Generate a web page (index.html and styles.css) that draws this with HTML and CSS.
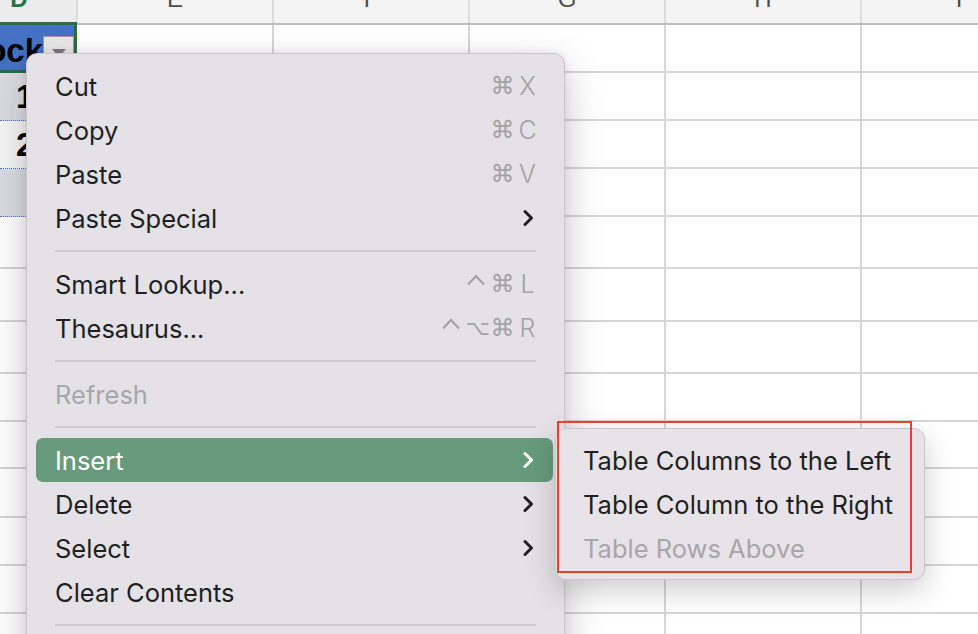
FILE: index.html
```html
<!DOCTYPE html>
<html>
<head>
<meta charset="utf-8">
<title>Context menu</title>
<link rel="stylesheet" href="styles.css">
</head>
<body>
<div class="sheet">
  <div class="hdr">
    <div class="hc first"><span>D</span></div>
    <div class="hc"><span>E</span></div>
    <div class="hc"><span>F</span></div>
    <div class="hc"><span>G</span></div>
    <div class="hc"><span>H</span></div>
    <div class="hc"><span>I</span></div>
  </div>
  <div class="row h48">
    <div class="c first th"><span class="thtext">Stock</span><span class="filter"><svg width="16" height="10" viewBox="0 0 16 10"><path d="M1 1 L15 1 L8 9 Z" fill="#7b7b7b"/></svg></span></div>
    <div class="c"></div><div class="c"></div><div class="c"></div><div class="c"></div><div class="c"></div>
  </div>
  <div class="row h48">
    <div class="c first band num">1</div>
    <div class="c"></div><div class="c"></div><div class="c"></div><div class="c"></div><div class="c"></div>
  </div>
  <div class="row h48">
    <div class="c first band2 num">2</div>
    <div class="c"></div><div class="c"></div><div class="c"></div><div class="c"></div><div class="c"></div>
  </div>
  <div class="row h48">
    <div class="c first band"></div>
    <div class="c"></div><div class="c"></div><div class="c"></div><div class="c"></div><div class="c"></div>
  </div>
  <div class="row h52">
    <div class="c first"></div><div class="c"></div><div class="c"></div><div class="c"></div><div class="c"></div><div class="c"></div>
  </div>
  <div class="row h53">
    <div class="c first"></div><div class="c"></div><div class="c"></div><div class="c"></div><div class="c"></div><div class="c"></div>
  </div>
  <div class="row h52">
    <div class="c first"></div><div class="c"></div><div class="c"></div><div class="c"></div><div class="c"></div><div class="c"></div>
  </div>
  <div class="row h48">
    <div class="c first"></div><div class="c"></div><div class="c"></div><div class="c"></div><div class="c"></div><div class="c"></div>
  </div>
  <div class="row h47">
    <div class="c first"></div><div class="c"></div><div class="c"></div><div class="c"></div><div class="c"></div><div class="c"></div>
  </div>
  <div class="row h49">
    <div class="c first"></div><div class="c"></div><div class="c"></div><div class="c"></div><div class="c"></div><div class="c"></div>
  </div>
  <div class="row h48">
    <div class="c first"></div><div class="c"></div><div class="c"></div><div class="c"></div><div class="c"></div><div class="c"></div>
  </div>
  <div class="row h48">
    <div class="c first"></div><div class="c"></div><div class="c"></div><div class="c"></div><div class="c"></div><div class="c"></div>
  </div>
  <div class="row h48">
    <div class="c first"></div><div class="c"></div><div class="c"></div><div class="c"></div><div class="c"></div><div class="c"></div>
  </div>
</div>

<div class="menu">
  <div class="item"><span class="label">Cut</span><span class="keys"><span class="k sym">⌘</span><span class="k">X</span></span></div>
  <div class="item"><span class="label">Copy</span><span class="keys"><span class="k sym">⌘</span><span class="k">C</span></span></div>
  <div class="item"><span class="label">Paste</span><span class="keys"><span class="k sym">⌘</span><span class="k">V</span></span></div>
  <div class="item"><span class="label">Paste Special</span><span class="keys"><span class="k arrow"><svg width="12" height="18" viewBox="0 0 12 18"><path d="M3 2.5 L9.5 9 L3 15.5" fill="none" stroke="#1f1f21" stroke-width="3" stroke-linecap="round" stroke-linejoin="round"/></svg></span></span></div>
  <div class="sep"></div>
  <div class="item"><span class="label">Smart Lookup...</span><span class="keys"><span class="k ctrl" aria-label="Control"><svg width="20" height="12" viewBox="0 0 20 12"><path d="M2 10.5 L10 2 L18 10.5" fill="none" stroke="#a2a1a6" stroke-width="2.2" stroke-linejoin="miter"/></svg></span><span class="k sym">⌘</span><span class="k">L</span></span></div>
  <div class="item"><span class="label">Thesaurus...</span><span class="keys"><span class="k ctrl" aria-label="Control"><svg width="20" height="12" viewBox="0 0 20 12"><path d="M2 10.5 L10 2 L18 10.5" fill="none" stroke="#a2a1a6" stroke-width="2.2" stroke-linejoin="miter"/></svg></span><span class="k sym opt">⌥</span><span class="k sym">⌘</span><span class="k">R</span></span></div>
  <div class="sep"></div>
  <div class="item disabled"><span class="label">Refresh</span></div>
  <div class="sep"></div>
  <div class="item active"><span class="label">Insert</span><span class="keys"><span class="k arrow"><svg width="12" height="18" viewBox="0 0 12 18"><path d="M3 2.5 L9.5 9 L3 15.5" fill="none" stroke="#ffffff" stroke-width="3" stroke-linecap="round" stroke-linejoin="round"/></svg></span></span></div>
  <div class="item"><span class="label">Delete</span><span class="keys"><span class="k arrow"><svg width="12" height="18" viewBox="0 0 12 18"><path d="M3 2.5 L9.5 9 L3 15.5" fill="none" stroke="#1f1f21" stroke-width="3" stroke-linecap="round" stroke-linejoin="round"/></svg></span></span></div>
  <div class="item"><span class="label">Select</span><span class="keys"><span class="k arrow"><svg width="12" height="18" viewBox="0 0 12 18"><path d="M3 2.5 L9.5 9 L3 15.5" fill="none" stroke="#1f1f21" stroke-width="3" stroke-linecap="round" stroke-linejoin="round"/></svg></span></span></div>
  <div class="item"><span class="label">Clear Contents</span></div>
  <div class="sep"></div>
</div>

<div class="submenu">
  <div class="item"><span class="label">Table Columns to the Left</span></div>
  <div class="item"><span class="label">Table Column to the Right</span></div>
  <div class="item disabled"><span class="label">Table Rows Above</span></div>
</div>

<div class="annot"></div>
</body>
</html>
```

FILE: styles.css
```css
* { box-sizing: border-box; }
html, body { margin: 0; padding: 0; }
body {
  width: 978px;
  height: 634px;
  overflow: hidden;
  position: relative;
  background: #ffffff;
  font-family: Inter, "Liberation Sans", sans-serif;
}

/* spreadsheet */
.sheet { width: 1100px; }
.hdr {
  display: flex;
  height: 25px;
  background: #f4f4f4;
  border-bottom: 2px solid #bdbdbd;
}
.hc {
  flex: 0 0 196px;
  border-right: 2px solid #dcdcdc;
  display: flex;
  justify-content: center;
  align-items: flex-end;
  overflow: hidden;
  font: 24px/1 "Liberation Sans", sans-serif;
  color: #4d4d4d;
}
.hc span { margin-bottom: 12px; }
.hc.first {
  flex-basis: 78px;
  padding-right: 38px;
  color: #217346;
  font-weight: bold;
  background: #ececec;
}

.row { display: flex; }
.h47 { height: 47px; }
.h48 { height: 48px; }
.h49 { height: 49px; }
.h52 { height: 52px; }
.h53 { height: 53px; }

.c {
  flex: 0 0 196px;
  border-right: 2px solid #d6d6d6;
  border-bottom: 2px solid #d6d6d6;
}
.c.first { flex-basis: 78px; }

.th {
  position: relative;
  background: #4472c4;
  display: flex;
  justify-content: flex-end;
  align-items: center;
  overflow: visible;
  padding-right: 2px;
  border-right-color: #ffffff;
  border-bottom: 2px solid #ffffff;
}
.th::after {
  content: "";
  position: absolute;
  left: -10px;
  top: -3px;
  right: -1px;
  bottom: -2px;
  border: 3px solid #2d6b42;
}
.thtext {
  font: bold 33px/1 "Liberation Sans", sans-serif;
  color: #000;
  white-space: nowrap;
  overflow: hidden;
  direction: rtl;
  width: 43px;
  text-align: left;
  padding-top: 4px;
}
.filter {
  width: 31px;
  height: 30px;
  background: #e8e8e8;
  border: 1px solid #9c9c9c;
  display: flex;
  justify-content: center;
  padding-top: 11px;
  margin-top: 6px;
}
.band { background: #dadde4; border-bottom: 1px dotted #4472c4; }
.band2 { background: #f6f6f6; border-bottom: 1px dotted #4472c4; }
.num {
  font: bold 33px/1 "Liberation Sans", sans-serif;
  color: #000;
  padding-left: 16px;
  display: flex;
  align-items: center;
}

/* context menu */
.menu {
  position: absolute;
  left: 26px;
  top: 53px;
  width: 539px;
  height: 640px;
  background: #e4e2e7;
  border: 1px solid #c9c7cd;
  border-radius: 11px;
  box-shadow: 0 14px 40px rgba(0, 0, 0, 0.22), 0 0 8px rgba(0, 0, 0, 0.08);
  padding-top: 10px;
}
.item {
  display: flex;
  align-items: center;
  height: 44px;
  margin: 0 11px 0 9px;
  padding: 0 13px 0 19px;
  border-radius: 7px;
  font-size: 25.5px;
  color: #1f1f21;
  white-space: nowrap;
}
.label { flex: 1; }
.item.disabled { color: #a7a6ab; }
.item.active { background: #679a7b; color: #ffffff; }
.keys { display: flex; align-items: center; color: #a2a1a6; }
.k {
  width: 25px;
  text-align: center;
  font-size: 25px;
  font-weight: 300;
}
.k.sym { font-family: "DejaVu Sans", sans-serif; font-size: 24px; font-weight: normal; }
.k.sym.opt { font-size: 21px; }
.k.arrow { display: flex; justify-content: center; align-items: center; }
.k.ctrl { display: flex; justify-content: center; align-items: flex-start; height: 24px; padding-top: 2px; margin-right: 2px; }
.sep {
  height: 2px;
  margin: 10px 28px;
  background: #cbc9cf;
}

/* submenu */
.submenu {
  position: absolute;
  left: 555px;
  top: 428px;
  width: 370px;
  height: 152px;
  background: #e7e3e8;
  border: 1px solid #c9c7cd;
  border-radius: 11px;
  box-shadow: 0 10px 30px rgba(0, 0, 0, 0.2);
  padding-top: 9px;
}
.submenu .item {
  margin: 0;
  padding-left: 27px;
}

.annot {
  position: absolute;
  left: 557px;
  top: 421px;
  width: 355px;
  height: 152px;
  border: 2px solid #ea4129;
}
```
